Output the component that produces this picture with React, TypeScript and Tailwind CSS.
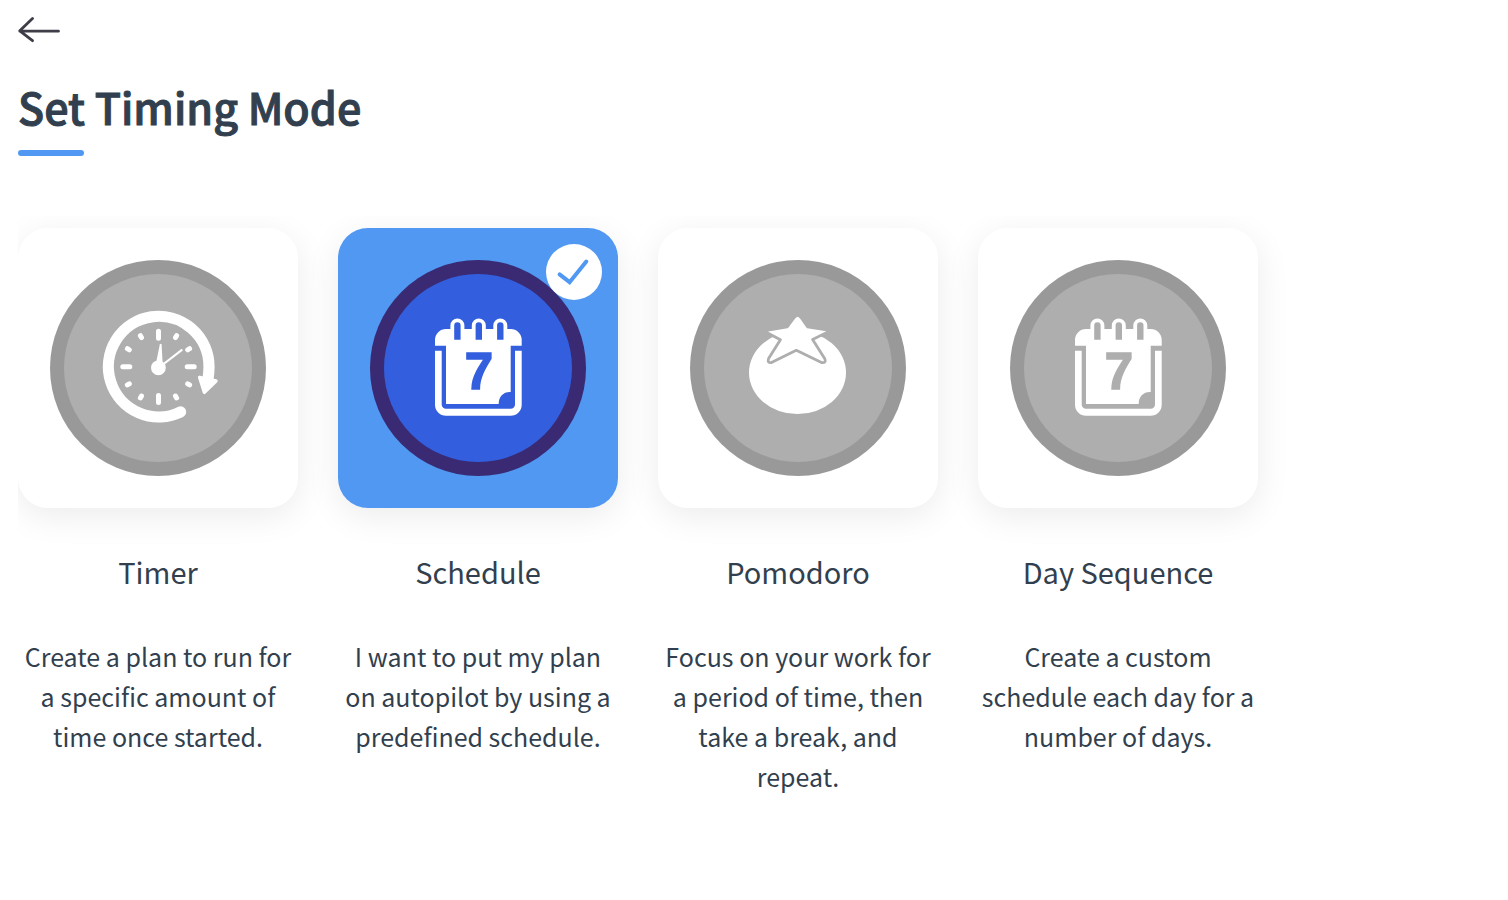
import React, { useState } from 'react';

interface TimingMode {
  id: string;
  title: string;
  description: string;
  icon: React.ComponentType;
}

function TimerIcon() {
  return (
    <>
      <path
        d="M131 151.7A50.3 50.3 0 1 1 159 107C159 112 158.6 115 158 119"
        fill="none"
        stroke="white"
        strokeWidth="11.2"
      />
      <circle cx="130.6" cy="151.9" r="5.6" fill="white" />
      <path
        d="M149.6 117.3L166 121L154.4 132.4Z"
        fill="white"
        stroke="white"
        strokeWidth="3.4"
        strokeLinejoin="round"
      />
      <g stroke="white" strokeWidth="5" strokeLinecap="round">
        <path d="M108.5 71.2V78.2M108.5 135.4V142.4M72.8 106.8H79.8M137.2 106.8H144.2" />
        {/* Hour dots */}
        <path d="M90.4 75.7L91.5 77.6M126.6 75.7L125.5 77.6M77.4 88.7L79.3 89.8M139.6 88.7L137.7 89.8M77.4 124.9L79.3 123.8M139.6 124.9L137.7 123.8M90.4 137.9L91.5 136M126.6 137.9L125.5 136" />
      </g>
      <circle cx="108.4" cy="107.8" r="7.4" fill="white" />
      <path d="M109.8 84.5Q110.7 82.8 111.6 84.5L112.6 103H106Z" fill="white" />
      <path d="M113.6 104L131.6 90.2" stroke="white" strokeWidth="2.2" strokeLinecap="round" />
    </>
  );
}

function CalendarIcon() {
  return (
    <>
      <path
        d="M65 85.7V80A11 11 0 0 1 76 69H140.7A11 11 0 0 1 151.7 80V85.7H140.7V132C133.5 131.6 128.7 136.5 128.7 144H76V85.7Z"
        fill="white"
      />
      <path
        d="M65 90.7H71.7V144.5A4.3 4.3 0 0 0 76 148.8H140.7A4.3 4.3 0 0 0 145 144.5V90.7H151.7V144.5A11 11 0 0 1 140.7 155.7H76A11 11 0 0 1 65 144.5Z"
        fill="white"
      />
      {/* Binder rings */}
      <path
        d="M80.4 72V65.4a7 7 0 0 1 14 0V72ZM101.8 72V65.4a7 7 0 0 1 14 0V72ZM123.3 72V65.4a7 7 0 0 1 14 0V72Z"
        fill="white"
      />
      <path
        d="M84.2 79.7V65.4a3.2 3.2 0 0 1 6.4 0V79.7ZM105.6 79.7V65.4a3.2 3.2 0 0 1 6.4 0V79.7ZM127.1 79.7V65.4a3.2 3.2 0 0 1 6.4 0V79.7Z"
        fill="currentColor"
      />
      <text
        x="109"
        y="129"
        textAnchor="middle"
        fill="currentColor"
        stroke="currentColor"
        strokeWidth="1.5"
        className="font-['Liberation_Sans',sans-serif] text-[51px] font-bold"
      >
        7
      </text>
    </>
  );
}

function TomatoIcon() {
  return (
    <>
      <ellipse cx="107.5" cy="112.6" rx="48.5" ry="41.5" fill="white" />
      <path
        d="M104.2 57.5Q107.6 53.4 111 57.5L117.5 66.8L136.5 69.8Q139.5 70.7 136.8 72.6L122.6 79.6L134.8 98.8Q136.6 103.2 131.5 102.6L106.3 90.3L81.5 102.6Q77 103.2 78.6 98.4L90.4 79.8L77.2 72.8Q75.2 70.8 78.2 70L97.2 66.8Z"
        fill="white"
        stroke="currentColor"
        strokeWidth="2.8"
        strokeLinejoin="round"
      />
    </>
  );
}

const modes: TimingMode[] = [
  {
    id: 'timer',
    title: 'Timer',
    description: 'Create a plan to run for a specific amount of time once started.',
    icon: TimerIcon,
  },
  {
    id: 'schedule',
    title: 'Schedule',
    description: 'I want to put my plan on autopilot by using a predefined schedule.',
    icon: CalendarIcon,
  },
  {
    id: 'pomodoro',
    title: 'Pomodoro',
    description: 'Focus on your work for a period of time, then take a break, and repeat.',
    icon: TomatoIcon,
  },
  {
    id: 'day-sequence',
    title: 'Day Sequence',
    description: 'Create a custom schedule each day for a number of days.',
    icon: CalendarIcon,
  },
];

export default function App() {
  const [selected, setSelected] = useState('schedule');

  return (
    <main className="min-h-screen bg-white px-[18px] pt-4 font-['Noto_Sans_CJK_SC',sans-serif] text-[#323f4e]">
      <button type="button" aria-label="Back" className="block cursor-pointer text-[#3f3d47]">
        <svg width="42" height="28" viewBox="0 0 42 28" fill="none" stroke="currentColor" strokeWidth="2.8" strokeLinecap="round" strokeLinejoin="round">
          <path d="M14.5 2.5L1.8 14.8L14.5 24.7M1.8 15.2H40.5" />
        </svg>
      </button>

      <h1
        id="timing-mode-title"
        className="mt-8 text-[43px] leading-[60px] font-medium [-webkit-text-stroke:1px_currentColor]"
      >
        Set Timing Mode
      </h1>
      <div className="mt-[14px] h-[6px] w-[66px] rounded-full bg-[#5098f2]" />

      <div
        role="radiogroup"
        aria-labelledby="timing-mode-title"
        className="mt-[60px] flex flex-wrap gap-10 overflow-hidden pt-3 pb-10"
      >
        {modes.map((mode) => {
          const isSelected = mode.id === selected;
          const Icon = mode.icon;

          return (
            <label key={mode.id} className="w-[280px] cursor-pointer text-center">
              <input
                type="radio"
                name="timing-mode"
                value={mode.id}
                checked={isSelected}
                onChange={() => setSelected(mode.id)}
                className="sr-only"
              />
              <span
                className={`relative block rounded-[30px] p-8 shadow-[0_8px_34px_rgba(0,0,0,0.08)] ${
                  isSelected ? 'bg-[#5098f2]' : 'bg-white'
                }`}
              >
                <svg
                  viewBox="0 0 216 216"
                  className={`block w-full ${isSelected ? 'text-[#335fde]' : 'text-[#aeaeae]'}`}
                  aria-hidden="true"
                >
                  <circle cx="108" cy="108" r="108" fill={isSelected ? '#392a73' : '#999999'} />
                  <circle cx="108" cy="108" r="94" fill="currentColor" />
                  <Icon />
                </svg>
                {isSelected && (
                  <span className="absolute top-4 right-4 size-14 rounded-full bg-white text-[#5098f2]">
                    <svg viewBox="0 0 56 56" fill="none" stroke="currentColor" strokeWidth="4" strokeLinecap="round">
                      <path d="M13.6 30.4L23.6 38.2L40.3 17.6" />
                    </svg>
                  </span>
                )}
              </span>
              <span className="mt-[42px] block text-[29px] leading-[42px]">{mode.title}</span>
              <span className="mt-11 block text-[25px] leading-10">{mode.description}</span>
            </label>
          );
        })}
      </div>
    </main>
  );
}
